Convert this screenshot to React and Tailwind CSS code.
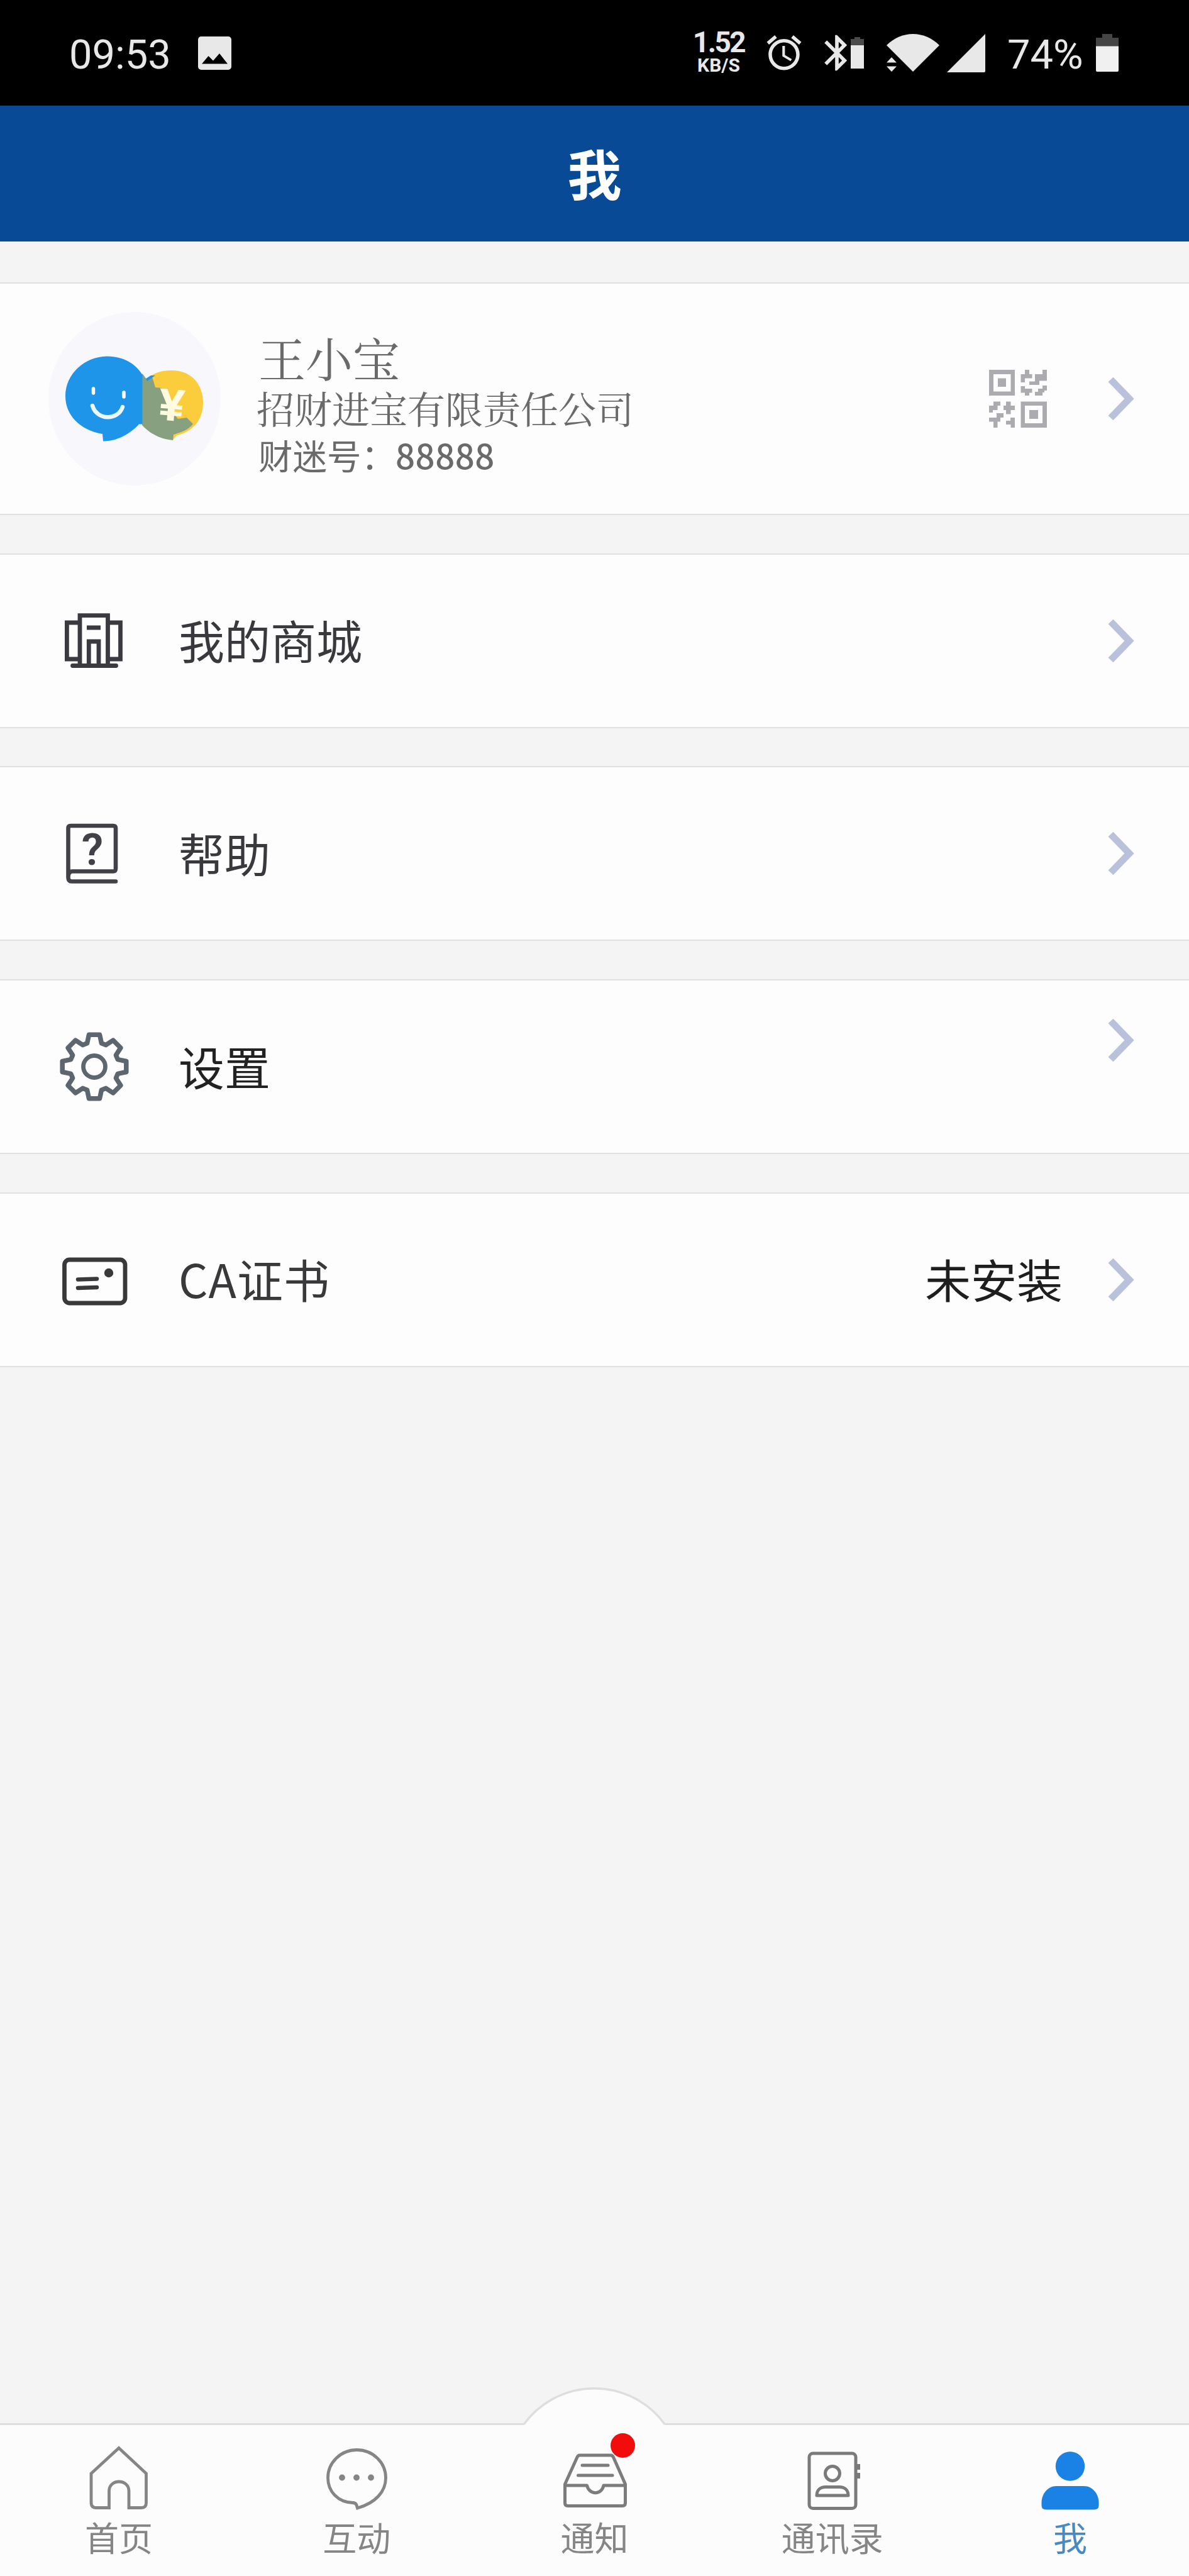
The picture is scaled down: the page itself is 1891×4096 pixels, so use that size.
import { MdAlarm, MdBluetooth } from 'react-icons/md';

// Outline of the settings gear: eight teeth around (60, 60)
const gearPoints = Array.from({ length: 8 })
  .flatMap((_, i) =>
    [[-17, 39], [-9.5, 51.5], [9.5, 51.5], [17, 39]].map(([offset, r]) => {
      const a = ((i * 45 + offset) * Math.PI) / 180;
      return `${(60 + r * Math.sin(a)).toFixed(1)},${(60 - r * Math.cos(a)).toFixed(1)}`;
    })
  )
  .join(' ');

const MallIcon = () => (
  <svg viewBox="0 0 120 120" className="size-[120px]" fill="none" stroke="#3a3a40" strokeWidth="6.8">
    <path d="M37 31H16.4V89H37M81.5 31h20V89h-20" />
    <path d="M37 99V19.6H81.5V99M51.3 99V61H67V99M48 39H70" />
    <path d="M25.5 99.5H94.5" strokeLinecap="round" />
  </svg>
);

const HelpIcon = () => (
  <svg viewBox="0 0 120 120" className="size-[120px]" fill="none" stroke="#424148" strokeWidth="6.6" strokeLinecap="round">
    <path d="M18.5 98V20q0-4 4-4H90q4 0 4 4V84q0 4.5-4 4.5H25q-6.5 0-6.5 9.5 0 6.5 5.5 6.5H94" />
    <text x="57" y="78" textAnchor="middle" fill="#424148" stroke="none" className="font-[Roboto] text-[70px] font-semibold">?</text>
  </svg>
);

const GearIcon = () => (
  <svg viewBox="0 0 120 120" className="size-[120px]" fill="none" stroke="#5d656f" strokeWidth="7.5" strokeLinejoin="round">
    <polygon points={gearPoints} />
    <circle cx="60" cy="60" r="17.5" strokeWidth="6.8" />
  </svg>
);

const CertIcon = () => (
  <svg viewBox="0 0 120 120" className="size-[120px]" fill="none" stroke="#39383a" strokeWidth="6.8">
    <rect x="12.5" y="28" width="96.5" height="69" rx="8" />
    <path d="M34 59.5 48 59 64 58.5M34 73 48 72.5 64 72" strokeWidth="6.5" strokeLinecap="round" />
    <circle cx="83" cy="49" r="7.2" fill="#39383a" stroke="none" />
  </svg>
);

const Chevron = ({ className = '' }) => (
  <svg viewBox="0 0 42 70" className={`w-[42px] h-[70px] ${className}`} fill="none" stroke="#b9c2da" strokeWidth="11">
    <path d="M4.5 4.5 34 35 4.5 65.5" />
  </svg>
);

const Avatar = () => (
  <svg viewBox="0 0 274 276" className="w-[274px] h-[276px]">
    <ellipse cx="137" cy="138" rx="137" ry="138" fill="#f8f8fc" />
    <path d="M152 112C164 96 180 93 197 93C226 93 246 114 246 144C246 172 230 190 203 197L198 204C176 200 160 190 150 181Z" fill="#fbcd3c" />
    <path d="M149 98C153 101 155 109 159 106L165 103L170 120L181 121L190 150L206 170L220 168L230 178C222 188 212 191 199 195L198 204C176 202 160 192 149 180Z" fill="#87a080" />
    <path d="M93 70.500C122 71 140 84 149.500 100V178.500H144C134 190 112 206 87 205.500L86 194C50 188 27 164 27 134C27 98 58 71 93 70.500Z" fill="#1e95e9" />
    <path d="M155 106 163 101 170 101 157 110Z" fill="#1e95e9" />
    <path d="M71.500 122V129M120 128V135" stroke="#fff" strokeWidth="5.500" strokeLinecap="round" />
    <path d="M70 149C77 173 111 173 118 151" fill="none" stroke="#e9f8ff" strokeWidth="6.500" strokeLinecap="round" />
    <text x="196" y="172" textAnchor="middle" fill="#fffbe0" stroke="#fffbe0" strokeWidth="1.500" transform="rotate(5 196 148)" className="font-['Liberation_Sans'] text-[70px] font-bold">¥</text>
  </svg>
);

const QrIcon = () => (
  <svg viewBox="0 0 92 92" className="w-[92px] h-[92px]" fill="#acabaf">
    <path fillRule="evenodd" d="M0 0H41V41H0ZM7 7V34.5H34.5V7ZM14 13.5H27V27H14Z" />
    <path fillRule="evenodd" d="M50.5 50.5H92V92H50.5ZM57 57V85H85V57ZM64 64H78V78H64Z" />
    <path d="M57 0H64V7H68.5V13.5H57V20H50.5V7H57ZM85 0H92V17.5H80V24H64V18.5H73V7H85Z" />
    <path d="M50.5 26H57V30H68.5V36.5H64V41H57V36.5H50.5ZM92 25V33H88V36H85V41H73V35H78V30H85V25Z" />
    <path d="M7 50.5H18V57H13.5V64H6V68H0V57H7ZM27 50.5H34.5V57H41V64H34.5V70.5H27V64H23V57H27Z" />
    <path d="M12 69H23V76H18V82.5H13.5V92H7V82.5H0V76H12ZM34 76H41V92H34.5V87H27V81H34Z" />
  </svg>
);

const HomeIcon = () => (
  <path d="M60 4.5 16 45V91Q16 99.5 24 99.5H44.5V73C44.5 53 76 53 76 73V99.5H96Q103.5 99.5 103.5 92V45Z" />
);

const ChatIcon = () => (
  <>
    <path d="M61.5 100 60 95Q58.5 91.5 54 91.5C31 91 14.5 74 14.5 52A46 44.5 0 0 1 106.5 52C106.5 74 90 92 61.5 100Z" />
    <g fill="#858585" stroke="none">
      <circle cx="37" cy="51.5" r="4.9" />
      <circle cx="60" cy="51.5" r="4.9" />
      <circle cx="83" cy="51.5" r="4.9" />
    </g>
  </>
);

const InboxIcon = () => (
  <g stroke="#7c7c7c" strokeWidth="5" strokeLinecap="round" strokeLinejoin="round">
    <path d="M12.5 62 32 19Q33.5 16 36 16H85Q88 16 89.5 19L108.5 62V92Q108.5 96.5 104 96.5H17Q12.5 96.5 12.5 92Z" />
    <path d="M12.5 64H47.5C51 79.5 71 79.5 74 64H108.5M40 32H81M33.5 48H88" />
  </g>
);

const ContactsIcon = () => (
  <g stroke="#7a7a7a" strokeWidth="5">
    <rect x="23" y="13" width="74" height="87.5" rx="6" />
    <circle cx="60" cy="45" r="11.5" />
    <path d="M35 80C35 71 41 66.5 49 66.5H71C79 66.5 85 71 85 80Z" strokeLinejoin="round" />
    <path d="M101.5 30V39M101.5 44V53" />
  </g>
);

const MeIcon = () => (
  <g fill="#1a82e4" stroke="none">
    <circle cx="60" cy="33.5" r="23.2" />
    <path d="M38 65H82C96 65 105.5 78 105.5 91V96Q105.5 102.5 98 102.5H22Q14.5 102.5 14.5 96V91C14.5 78 24 65 38 65Z" />
  </g>
);

const rows = [
  { label: '我的商城', Icon: MallIcon, color: 'text-[#39383d]' },
  { label: '帮助', Icon: HelpIcon, color: 'text-[#39383d]' },
  { label: '设置', Icon: GearIcon, color: 'text-[#222222]', chevron: '-mt-[84px]' },
  { label: 'CA证书', Icon: CertIcon, color: 'text-[#39383a] tracking-[1px]', value: '未安装' },
];

const tabs = [
  { label: '首页', Icon: HomeIcon },
  { label: '互动', Icon: ChatIcon },
  { label: '通知', Icon: InboxIcon, badge: true },
  { label: '通讯录', Icon: ContactsIcon },
  { label: '我', Icon: MeIcon, active: true },
];

function StatusBar() {
  return (
    <div className="flex h-[168px] shrink-0 items-center justify-between bg-black pl-[110px] pr-[112px] font-[Roboto] text-[#e8e8e8]">
      <div className="flex items-center">
        <span className="w-[162px] pt-[6px] text-[65px] leading-none">09:53</span>
        <svg viewBox="0 0 53 53" className="ml-[43px] size-[53px]">
          <rect width="53" height="53" rx="5" fill="#e8e8e8" />
          <path d="M6 43.5 16.5 31 24 38.5 34 27 47 43.5Z" fill="#000" />
        </svg>
      </div>
      <div className="flex items-center">
        <div className="-mt-[6px] flex w-[80px] flex-col items-center font-bold">
          <span className="text-[46px] leading-[46px] tracking-[-2.5px]">1.52</span>
          <span className="text-[30px] leading-[28px]">KB/S</span>
        </div>
        <MdAlarm className="ml-[31px] size-[66px]" />
        <MdBluetooth className="ml-[17px] size-[68px]" />
        <svg viewBox="0 0 21 50" className="-ml-[12px] h-[50px] w-[21px]">
          <path d="M0 3H6V0H15V3H21V13H0Z" fill="#4b4b4b" />
          <path d="M0 13H21V50H0Z" fill="#e8e8e8" />
        </svg>
        <svg viewBox="0 0 84 60" className="ml-[36px] h-[60px] w-[84px]" fill="#e8e8e8">
          <path d="M0 18C24-6 60-6 84 18L42 60Z" />
          <path d="M0 45.5 8 37 16 45.5ZM0 51.5H16L8 60Z" />
        </svg>
        <svg viewBox="0 0 61 61" className="ml-[12px] size-[61px]" fill="#e8e8e8">
          <path d="M61 0V59Q61 61 59 61H0Z" />
        </svg>
        <span className="ml-[35px] w-[121px] pt-[6px] text-[65px] leading-none">74%</span>
        <svg viewBox="0 0 36 60" className="ml-[20px] h-[60px] w-[36px]">
          <path d="M0 6H10V0H26V6H36V20H0Z" fill="#454545" />
          <path d="M0 19.5H36V58Q36 60 34 60H2Q0 60 0 58Z" fill="#f0f0f0" />
        </svg>
      </div>
    </div>
  );
}

export default function App() {
  return (
    <div className="flex h-[4096px] w-[1891px] flex-col overflow-hidden bg-[#f4f4f4] font-['Noto_Sans_CJK_SC',sans-serif]">
      <StatusBar />
      <header className="flex h-[216px] shrink-0 items-center justify-center bg-[#084a96] text-[86px] font-bold leading-none text-white">
        <h1 className="-mt-[4px]">我</h1>
      </header>

      <main className="flex flex-1 flex-col gap-[60.7px] pt-[65px]">
        <section className="flex h-[370px] items-center border-y-2 border-[#e0e0e0] bg-[#fdfdfd] pl-[77px] pr-[87px]">
          <Avatar />
          <div className="ml-[57px] flex flex-1 flex-col pt-[13px] leading-none text-[#6a6a6a]">
            <span className="ml-[3px] font-['Noto_Serif_CJK_SC','Noto_Sans_CJK_SC',serif] text-[75px]">王小宝</span>
            <span className="mt-[13px] font-['Noto_Serif_CJK_SC','Noto_Sans_CJK_SC',serif] text-[60px]">招财进宝有限责任公司</span>
            <span className="ml-[3px] mt-[18px] whitespace-nowrap text-[54.5px]">
              财迷号：<span className="font-medium tracking-[0.5px]">88888</span>
            </span>
          </div>
          <QrIcon />
          <Chevron className="ml-[97px]" />
        </section>

        {rows.map(({ label, Icon, color, value, chevron }) => (
          <section key={label} className="flex h-[278px] items-center border-y-2 border-[#e0e0e0] bg-[#fdfdfd] pl-[90px] pr-[87px]">
            <Icon />
            <span className={`ml-[74px] -mt-[4px] flex-1 text-[73px] leading-none ${color}`}>{label}</span>
            {value && <span className="-mt-[4px] text-[73px] leading-none text-[#1e1e1e]">{value}</span>}
            <Chevron className={`ml-[72px] ${chevron || ''}`} />
          </section>
        ))}
      </main>

      <nav className="relative flex h-[243px] shrink-0 border-t-[3px] border-[#dedede] bg-[#fcfcfc]">
        {/* Raised bump behind the centre tab */}
        <svg viewBox="0 0 232 70" className="absolute -top-[62px] left-[829px] h-[70px] w-[232px]">
          <path d="M4 61A138.5 138.5 0 0 1 228.5 61V70H4Z" fill="#fcfcfc" />
          <path d="M4 61A138.5 138.5 0 0 1 228.5 61" fill="none" stroke="#dcdee0" strokeWidth="3.5" />
        </svg>
        {tabs.map(({ label, Icon, badge, active }) => (
          <div key={label} className="relative flex flex-1 flex-col items-center pt-[32px]">
            <svg viewBox="0 0 120 104" className="h-[104px] w-[120px]" fill="none" stroke="#858585" strokeWidth="4.8">
              <Icon />
            </svg>
            {badge && <span className="absolute left-[215px] top-[13px] size-[39px] rounded-full bg-[#f20d0d]" />}
            <span className={`mt-[15px] text-[54px] leading-none ${active ? 'text-[#4a88c2]' : 'text-[#858585]'}`}>{label}</span>
          </div>
        ))}
      </nav>
    </div>
  );
}
